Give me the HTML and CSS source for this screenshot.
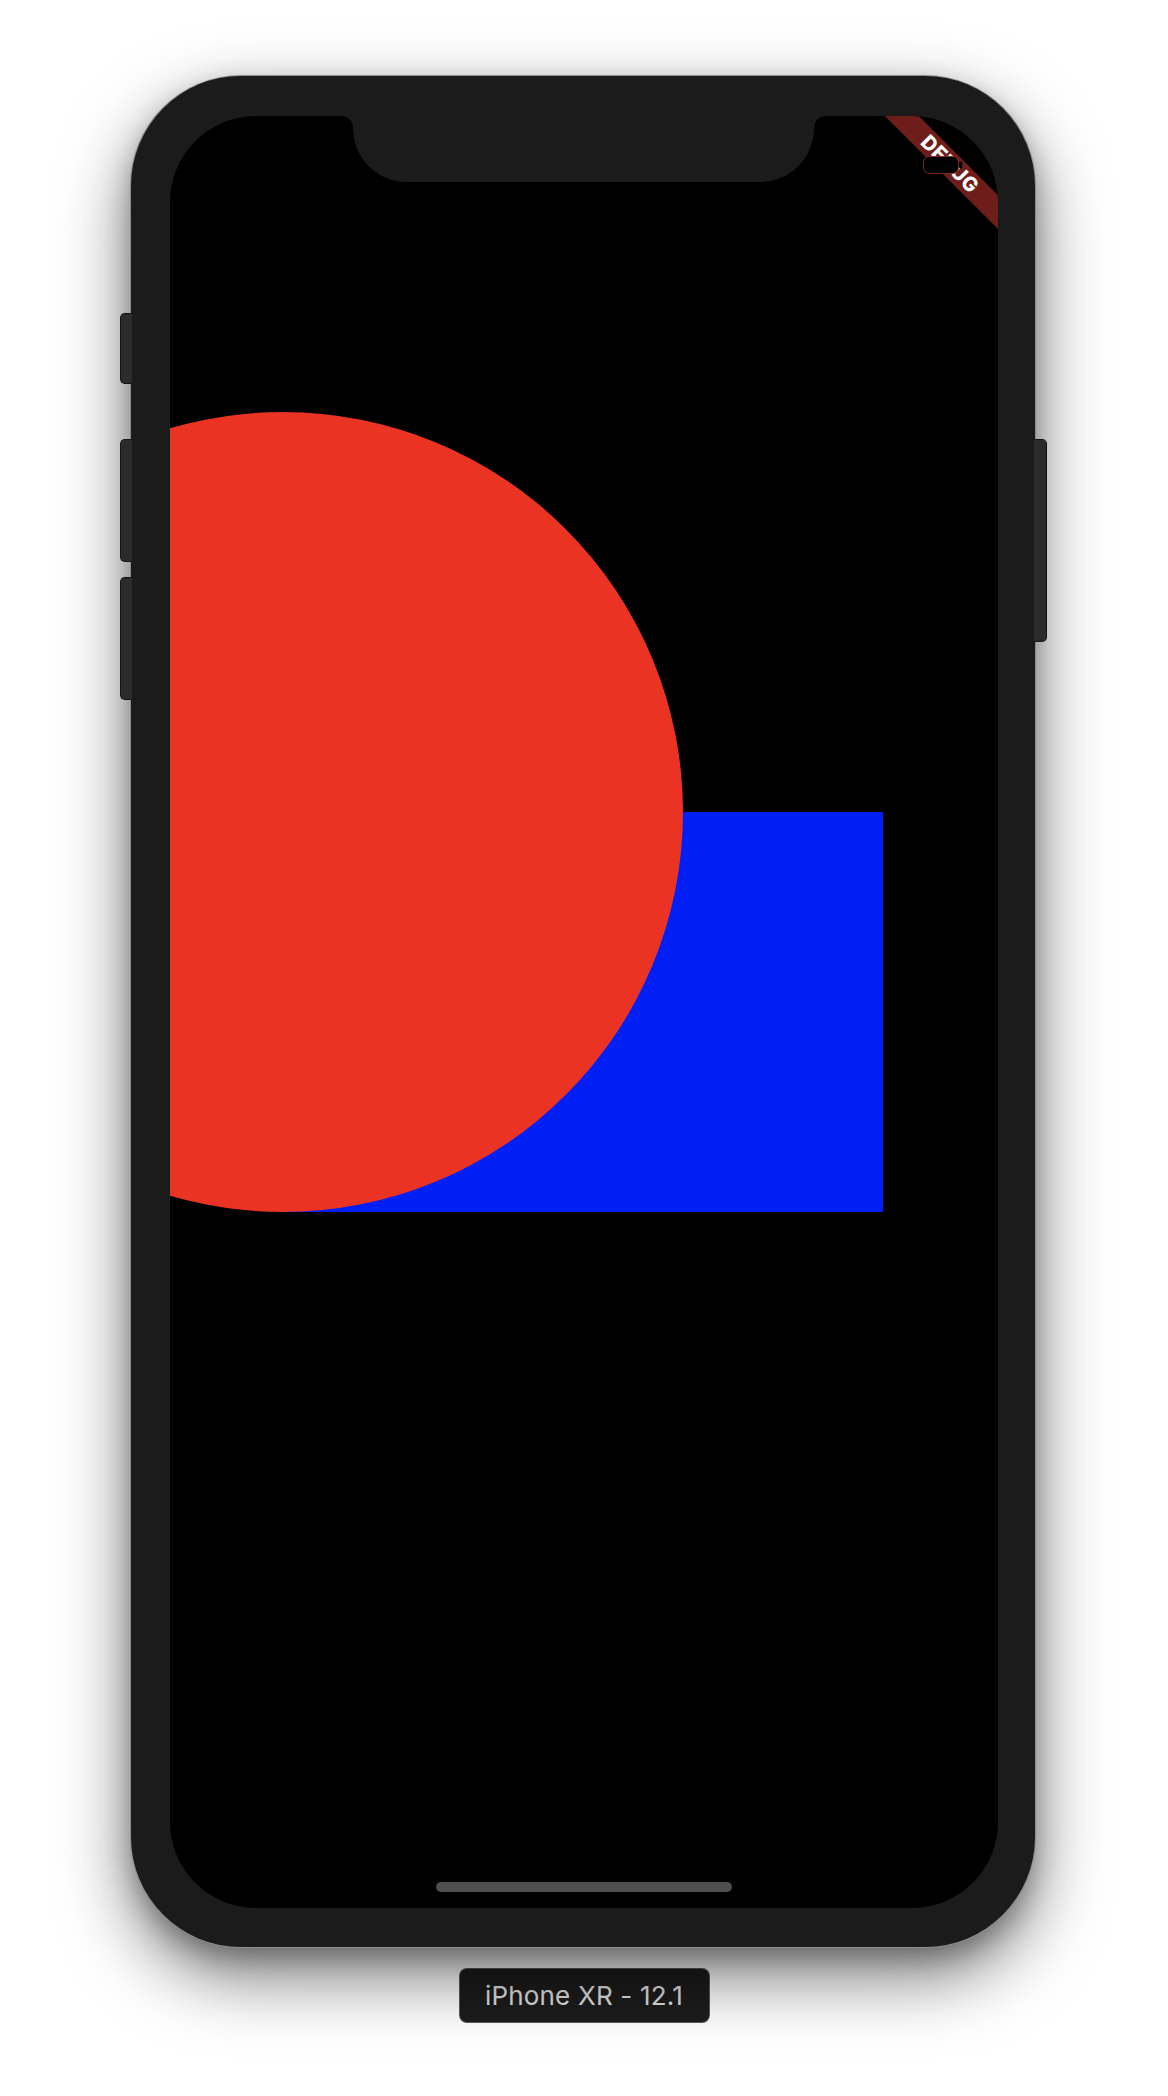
FILE: index.html
```html
<!DOCTYPE html>
<html>
<head>
<meta charset="utf-8">
<link rel="stylesheet" href="styles.css">
</head>
<body>
<div class="stage">
  <div class="phone">
    <div class="btn btn-l1"></div>
    <div class="btn btn-l2"></div>
    <div class="btn btn-l3"></div>
    <div class="btn btn-r1"></div>
    <div class="screen">
      <svg class="canvas" width="828" height="1792" viewBox="0 0 828 1792" xmlns="http://www.w3.org/2000/svg">
        <rect x="113" y="696" width="600" height="400" fill="#001ff5"/>
        <circle cx="113" cy="696" r="400" fill="#ea3323"/>
        <polygon points="714.9,0 748.8,0 828,79.2 828,113.1" fill="#6e1e1a"/>
        <text x="780" y="48" transform="rotate(45 780 48)" text-anchor="middle" dominant-baseline="central" class="debug">DEBUG</text>
        <rect x="753.5" y="40.5" width="35" height="17" rx="6" fill="#000" stroke="#7a2a24" stroke-width="1"/>
        <rect x="789" y="45.5" width="3.5" height="7" rx="1.5" fill="#000"/>
      </svg>
      <div class="notch"></div>
      <div class="home"></div>
    </div>
  </div>
  <div class="label">iPhone XR - 12.1</div>
</div>
</body>
</html>
```
FILE: styles.css
```css
html, body {
  margin: 0;
  padding: 0;
  background: #ffffff;
}
.stage {
  width: 1168px;
  height: 2096px;
  display: flex;
  flex-direction: column;
  align-items: center;
  padding-top: 76px;
  box-sizing: border-box;
  font-family: Inter, "Liberation Sans", sans-serif;
}
.phone {
  position: relative;
  width: 904px;
  height: 1871px;
  box-sizing: border-box;
  padding: 40px 37px 39px 39px;
  background: #1b1b1b;
  border-radius: 110px;
  box-shadow: 0 0 0 1px #8e8e8e, 0 28px 70px rgba(0, 0, 0, 0.55), 0 10px 25px rgba(0, 0, 0, 0.25);
  margin-left: -2px;
}
.btn {
  position: absolute;
  background: #2b2b2b;
  border: 1px solid #151515;
  box-sizing: border-box;
}
.btn-l1, .btn-l2, .btn-l3 {
  left: -11px;
  width: 12px;
  border-radius: 5px 0 0 5px;
  border-right: none;
}
.btn-l1 { top: 237px; height: 71px; }
.btn-l2 { top: 363px; height: 123px; }
.btn-l3 { top: 501px; height: 123px; }
.btn-r1 {
  right: -12px;
  width: 13px;
  top: 363px;
  height: 203px;
  border-radius: 0 5px 5px 0;
  border-left: none;
}
.screen {
  position: relative;
  width: 828px;
  height: 1792px;
  background: #000;
  border-radius: 86px;
  overflow: hidden;
}
.canvas {
  display: block;
}
.debug {
  fill: #ffffff;
  font-family: Inter, "Liberation Sans", sans-serif;
  font-weight: 800;
  font-size: 20px;
  letter-spacing: 0.5px;
}
.notch {
  position: absolute;
  left: 183px;
  top: 0;
  width: 461px;
  height: 66px;
  background: #1b1b1b;
  border-radius: 0 0 54px 54px;
}
.notch::before, .notch::after {
  content: "";
  position: absolute;
  top: 0;
  width: 11px;
  height: 11px;
}
.notch::before {
  left: -11px;
  background: radial-gradient(circle at 0 100%, transparent 10.5px, #1b1b1b 11px);
}
.notch::after {
  right: -11px;
  background: radial-gradient(circle at 100% 100%, transparent 10.5px, #1b1b1b 11px);
}
.home {
  position: absolute;
  left: 266px;
  top: 1766px;
  width: 296px;
  height: 10px;
  border-radius: 5px;
  background: #4e4e4e;
}
.label {
  margin-top: 21px;
  width: 251px;
  height: 55px;
  box-sizing: border-box;
  background: #1c1c1c;
  border: 1px solid rgba(150, 150, 150, 0.5);
  border-radius: 8px;
  color: #e0e0e0;
  font-size: 26px;
  display: flex;
  align-items: center;
  justify-content: center;
  letter-spacing: 0.2px;
}
```
